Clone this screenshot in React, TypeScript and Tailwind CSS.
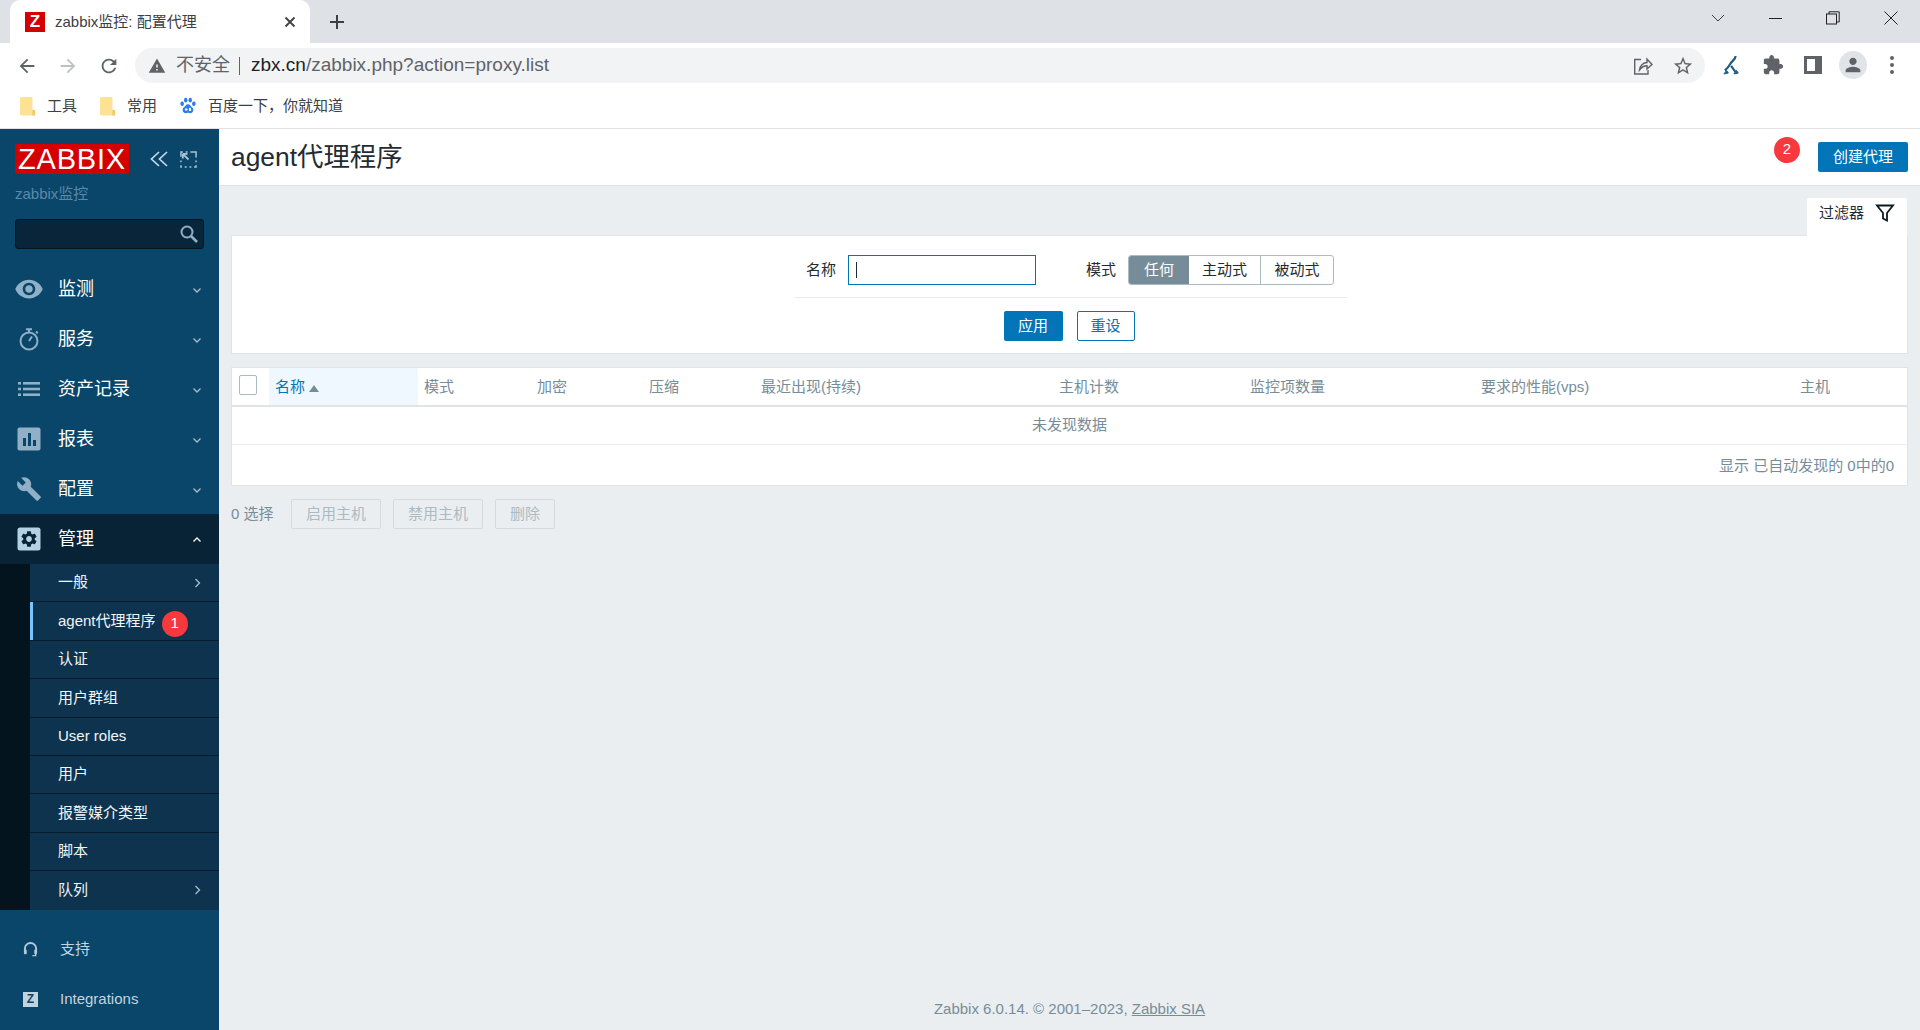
import React from "react";

const P = ({ d, className, fill = "currentColor" }: { d: string; className?: string; fill?: string }) => (
  <svg viewBox="0 0 24 24" className={className} fill={fill}><path d={d} /></svg>
);

const Chev = ({ dir = "down" }: { dir?: "down" | "up" | "right" }) => (
  <svg viewBox="0 0 10 10" className="w-[10px] h-[10px] text-[#a9bdcb]" fill="none" stroke="currentColor" strokeWidth="1.3">
    {dir === "down" && <path d="M1.5 3.5 5 7l3.5-3.5" />}
    {dir === "up" && <path d="M1.5 6.5 5 3l3.5 3.5" stroke="#fff" />}
    {dir === "right" && <path d="M3.5 1 7.5 5l-4 4" />}
  </svg>
);

const EyeI = () => <P className="w-[30px] h-[30px] text-[#8fb0c6]" d="M12 4.5C7 4.5 2.73 7.61 1 12c1.73 4.39 6 7.5 11 7.5s9.27-3.11 11-7.5c-1.73-4.39-6-7.5-11-7.5zM12 17c-2.76 0-5-2.24-5-5s2.24-5 5-5 5 2.24 5 5-2.24 5-5 5zm0-8c-1.66 0-3 1.34-3 3s1.34 3 3 3 3-1.34 3-3-1.34-3-3-3z" />;
const WatchI = () => (
  <svg viewBox="0 0 24 24" className="w-[24px] h-[24px] text-[#8fb0c6]" fill="none" stroke="currentColor" strokeWidth="2">
    <circle cx="12" cy="14" r="8.5" /><path d="M9 2.2h6M12 2.500v3M19 4.500l1.800 1.800M12 14l3-4.500" />
  </svg>
);
const ListI = () => (
  <svg viewBox="0 0 24 24" className="w-[24px] h-[24px] text-[#8fb0c6]" fill="currentColor">
    <rect x="1" y="5" width="3" height="2.6" /><rect x="6" y="5" width="17" height="2.6" />
    <rect x="1" y="10.7" width="3" height="2.6" /><rect x="6" y="10.7" width="17" height="2.6" />
    <rect x="1" y="16.4" width="3" height="2.6" /><rect x="6" y="16.4" width="17" height="2.6" />
  </svg>
);
const ChartI = () => (
  <svg viewBox="0 0 24 24" className="w-[24px] h-[24px]">
    <rect x="0.5" y="0.5" width="23" height="23" rx="2" fill="#8fb0c6" />
    <rect x="6" y="11" width="3" height="8" fill="#0a466a" /><rect x="11" y="6" width="3" height="13" fill="#0a466a" /><rect x="16" y="13" width="3" height="6" fill="#0a466a" />
  </svg>
);
const WrenchI = () => <P className="w-[26px] h-[26px] text-[#8fb0c6]" d="M22.7 19l-9.1-9.1c.9-2.3.4-5-1.5-6.9-2-2-5-2.4-7.4-1.3L9 6 6 9 1.6 4.7C.4 7.1.9 10.1 2.9 12.1c1.9 1.9 4.6 2.4 6.9 1.5l9.1 9.1c.4.4 1 .4 1.4 0l2.3-2.3c.5-.4.5-1.1.1-1.4z" />;
const GearI = () => (
  <svg viewBox="0 0 24 24" className="w-[24px] h-[24px]">
    <rect x="0.5" y="0.5" width="23" height="23" rx="2.5" fill="#b3d0e4" />
    <g transform="translate(2.4 2.4) scale(0.8)"><path fill="#082335" d="M19.14 12.94c.04-.3.06-.61.06-.94 0-.32-.02-.64-.07-.94l2.03-1.58c.18-.14.23-.41.12-.61l-1.92-3.32c-.12-.22-.37-.29-.59-.22l-2.39.96c-.5-.38-1.03-.7-1.62-.94l-.36-2.54c-.04-.24-.24-.41-.48-.41h-3.84c-.24 0-.43.17-.47.41l-.36 2.54c-.59.24-1.13.57-1.62.94l-2.39-.96c-.22-.08-.47 0-.59.22L2.74 8.87c-.12.21-.08.47.12.61l2.03 1.58c-.05.3-.09.63-.09.94s.02.64.07.94l-2.03 1.58c-.18.14-.23.41-.12.61l1.92 3.32c.12.22.37.29.59.22l2.39-.96c.5.38 1.03.7 1.62.94l.36 2.54c.05.24.24.41.48.41h3.84c.24 0 .44-.17.47-.41l.36-2.54c.59-.24 1.13-.56 1.62-.94l2.39.96c.22.08.47 0 .59-.22l1.92-3.32c.12-.22.07-.47-.12-.61l-2.01-1.58zM12 15.6c-1.98 0-3.6-1.62-3.6-3.6s1.62-3.6 3.6-3.6 3.6 1.62 3.6 3.6-1.62 3.6-3.6 3.6z" /></g>
  </svg>
);

const Folder = () => (
  <svg viewBox="0 0 16 20" className="w-[16px] h-[20px]">
    <path d="M1 2.500A1.500 1.500 0 0 1 2.500 1H12a1.500 1.500 0 0 1 1.500 1.500V14H16v4.500a1 1 0 0 1-1 1H2.500A1.500 1.500 0 0 1 1 18z" fill="#fde293" />
    <path d="M13.500 14H16v4.500a1 1 0 0 1-1 1h-1.500z" fill="#f3c95c" />
  </svg>
);

const Baidu = () => (
  <svg viewBox="0 0 20 20" className="w-[18px] h-[18px]" fill="#2b7de9">
    <ellipse cx="3.5" cy="7.5" rx="2" ry="2.6" /><ellipse cx="7.5" cy="3.5" rx="1.9" ry="2.6" />
    <ellipse cx="12.5" cy="3.5" rx="1.9" ry="2.6" /><ellipse cx="16.5" cy="7.5" rx="2" ry="2.6" />
    <path d="M10 8c-2.4 0-3 2.400-5 4-1.800 1.400-1 6 2.400 6 1 0 1.600-.4 2.600-.4s1.600.4 2.600.4c3.400 0 4.200-4.600 2.400-6-2-1.600-2.600-4-5-4z" />
    <circle cx="8" cy="14" r="1.4" fill="#fff" /><rect x="11" y="12" width="2.4" height="3.6" rx="1" fill="#fff" />
  </svg>
);

const Badge = ({ n }: { n: string }) => (
  <span className="w-[26px] h-[26px] rounded-full bg-[#f7383c] text-white text-[15px] leading-[24px] text-center">{n}</span>
);

const menu: [React.ReactNode, string, boolean][] = [
  [<EyeI />, "监测", false],
  [<WatchI />, "服务", false],
  [<ListI />, "资产记录", false],
  [<ChartI />, "报表", false],
  [<WrenchI />, "配置", false],
  [<GearI />, "管理", true],
];

const sub: [string, boolean][] = [
  ["一般", true],
  ["agent代理程序", false],
  ["认证", false],
  ["用户群组", false],
  ["User roles", false],
  ["用户", false],
  ["报警媒介类型", false],
  ["脚本", false],
  ["队列", true],
];

const Sidebar = () => (
  <aside className="w-[219px] shrink-0 bg-[#0a466a] flex flex-col h-full">
    <div className="pl-[15px] pr-[15px] pt-[15px]">
      <div className="flex items-center h-[30px]">
        <div className="w-[114px] h-[30px] bg-[#d40000] text-white text-[29px] leading-[30px] text-center tracking-[0.8px] font-normal">ZABBIX</div>
        <svg viewBox="0 0 20 20" className="w-[20px] h-[20px] ml-[20px] text-[#c8d9e4]" fill="none" stroke="currentColor" strokeWidth="1.7">
          <path d="M10 3 2.500 10l7.500 7M18 3l-7.500 7 7.500 7" />
        </svg>
        <svg viewBox="0 0 18 18" className="w-[17px] h-[17px] ml-[11px] text-[#a9c2d2]" fill="none" stroke="currentColor" strokeWidth="1.6">
          <path d="M1 6V1h2M6 1h2M11 1h6v6M17 10v2M17 15v2h-2M12 17h-2M7 17H5M2 17H1v-2M1 12v-2" />
          <path d="M9 9 3 3M3 3h5M3 3v5" strokeWidth="2" />
        </svg>
      </div>
      <div className="text-[15px] leading-[20px] text-[#5b89a8] mt-[10px]">zabbix监控</div>
      <div className="mt-[15px] h-[30px] w-[189px] rounded-[3px] bg-[#08253a] border border-[#041520] flex items-center justify-end pr-[4px]">
        <svg viewBox="0 0 20 20" className="w-[20px] h-[20px] text-[#8fb0c6]" fill="none" stroke="currentColor">
          <circle cx="8" cy="8" r="5.5" strokeWidth="2" /><path d="M12 12l6 6" strokeWidth="2.6" />
        </svg>
      </div>
    </div>
    <nav className="mt-[15px]">
      {menu.map(([icon, label, open]) => (
        <div key={label} className={`h-[50px] flex items-center relative ${open ? "bg-[#082335]" : ""}`}>
          <div className="w-[58px] flex justify-center">{icon}</div>
          <span className="text-[18px] leading-[26px] mb-[1px] text-white flex-1">{label}</span>
          <span className="pr-[17px] pt-[2px] flex"><Chev dir={open ? "up" : "down"} /></span>
        </div>
      ))}
      <div className="bg-[#03141e] pl-[30px]">
        {sub.map(([label, arrow], i) => (
          <div key={label} className={`h-[38.4px] flex items-center bg-[#0e334e] ${i < 8 ? "border-b border-[#061b2b]" : ""} ${i === 1 ? "bg-[#0b2b41] relative" : "pl-[28px]"}`}>
            {i === 1 && <span className="w-[3px] h-full bg-[#78c4ff] mr-[25px]" />}
            <span className="text-[15px] text-[#f2f6f8]">{label}</span>
            {i === 1 && <span className="ml-[6px] mt-[5px] flex"><Badge n="1" /></span>}
            {arrow && <span className="ml-auto pr-[17px] flex"><Chev dir="right" /></span>}
          </div>
        ))}
      </div>
    </nav>
    <div className="mt-[15px] flex flex-col">
      <div className="h-[50px] flex items-center pl-[23px] gap-[22px]">
        <svg viewBox="0 0 16 18" className="w-[15px] h-[17px] text-[#b3c9d8]" fill="none" stroke="currentColor" strokeWidth="2">
          <path d="M2 11V8a6 6 0 0 1 12 0v3" /><rect x="1" y="9" width="3" height="5" rx="1" fill="currentColor" strokeWidth="0" /><rect x="12" y="9" width="3" height="5" rx="1" fill="currentColor" strokeWidth="0" /><path d="M13.500 13v2.500H10" strokeWidth="1.5" />
        </svg>
        <span className="text-[15px] text-[#c3d4df]">支持</span>
      </div>
      <div className="h-[50px] flex items-center pl-[23px] gap-[22px]">
        <span className="w-[15px] h-[15px] bg-[#c3d4df] text-[#0a466a] text-[12px] leading-[15px] font-bold text-center">Z</span>
        <span className="text-[15px] text-[#c3d4df]">Integrations</span>
      </div>
    </div>
  </aside>
);

const Seg = ({ t, cls }: { t: string; cls: string }) => (
  <div className={`h-full flex items-center justify-center ${cls}`}>{t}</div>
);

const Filter = () => (
  <div className="bg-white border border-[#dfe4e7] h-[119px] flex flex-col items-center">
    <div className="flex items-center h-[30px] mt-[19px] ml-[1px]">
      <label className="text-[15px] text-[#1f2c33] mr-[12px]">名称</label>
      <div className="w-[188px] h-[30px] border border-[#0275b8] flex items-center pl-[7px]">
        <span className="w-px h-[16px] bg-[#1f2c33]" />
      </div>
      <label className="text-[15px] text-[#1f2c33] ml-[50px] mr-[12px]">模式</label>
      <div className="flex h-[30px] w-[206px] text-[15px] text-[#1f2c33] border border-[#acbbc2] rounded-[3px] overflow-hidden">
        <Seg t="任何" cls="w-[60px] bg-[#768d99] text-white" />
        <Seg t="主动式" cls="w-[72px] border-r border-[#acbbc2]" />
        <Seg t="被动式" cls="w-[72px]" />
      </div>
    </div>
    <div className="w-[553px] h-px bg-[#ebeef0] mt-[12px] ml-[1px]" />
    <div className="flex gap-[14px] mt-[13px] ml-[-1px]">
      <div className="w-[59px] h-[30px] rounded-[2px] bg-[#0275b8] text-white text-[15px] flex items-center justify-center">应用</div>
      <div className="w-[58px] h-[30px] rounded-[2px] border border-[#0275b8] text-[#0275b8] text-[15px] flex items-center justify-center">重设</div>
    </div>
  </div>
);

const cols: [string, number][] = [
  ["模式", 113], ["加密", 112], ["压缩", 112], ["最近出现(持续)", 298], ["主机计数", 191], ["监控项数量", 231], ["要求的性能(vps)", 319], ["主机", 113],
];

const ProxyTable = () => (
  <div className="bg-white border border-[#dfe4e7] mt-[13px]">
    <table className="w-full table-fixed border-collapse text-[15px]">
      <colgroup>
        <col className="w-[37px]" />
        <col className="w-[149px]" />
        {cols.map(([t, w]) => <col key={t} style={{ width: w }} />)}
      </colgroup>
      <thead>
        <tr className="h-[38px] border-b-2 border-[#dfe4e7]">
          <th className="p-0 pl-[7px] pb-[3px] font-normal text-left"><span className="block w-[18px] h-[20px] border border-[#acbbc2] rounded-[2px]" /></th>
          <th className="p-0 pl-[6px] pt-[1px] font-normal text-left bg-[#f0f8ff] text-[#0275b8]">
            名称<span className="inline-block ml-[4px] w-0 h-0 border-x-[5px] border-x-transparent border-b-[7px] border-b-[#768d99]" />
          </th>
          {cols.map(([t]) => <th key={t} className="p-0 pl-[6px] pt-[1px] font-normal text-left text-[#768d99]">{t}</th>)}
        </tr>
      </thead>
      <tbody>
        <tr className="h-[38px] border-b border-[#ebeef0]">
          <td colSpan={10} className="text-center text-[#768d99] p-0">未发现数据</td>
        </tr>
      </tbody>
    </table>
    <div className="h-[40px] flex items-center justify-end pr-[13px] pt-[4px] text-[15px] text-[#768d99]">显示 已自动发现的 0中的0</div>
  </div>
);

const Dis = ({ t, w }: { t: string; w: string }) => (
  <div className={`h-[30px] ${w} rounded-[2px] border border-[#d5dade] bg-[#ebeef0] text-[#acbbc2] text-[15px] flex items-center justify-center`}>{t}</div>
);

const Main = () => (
  <main className="flex-1 min-w-0 flex flex-col bg-[#ebeef0]">
    <header className="h-[57px] bg-white border-b border-[#dfe4e7] flex items-center pl-[12px] pr-[12px]">
      <h1 className="text-[26.4px] text-[#1f2c33] font-normal leading-none mt-[1px] flex-1">agent代理程序</h1>
      <span className="flex mr-[18px] mt-[-14px]"><Badge n="2" /></span>
      <div className="w-[90px] h-[30px] rounded-[2px] bg-[#0275b8] text-white text-[15px] flex items-center justify-center">创建代理</div>
    </header>
    <div className="pl-[12px] pr-[12px] flex-1 flex flex-col">
      <div className="flex justify-end mt-[12px] pr-[1px]">
        <div className="w-[100px] h-[38px] bg-white rounded-t-[2px] flex items-start pl-[12px] pt-[5px] gap-[11px] -mb-px relative z-10">
          <span className="text-[15px] leading-[20px] text-[#1f2c33]">过滤器</span>
          <svg viewBox="0 0 20 20" className="w-[20px] h-[20px] text-[#0c1a22]" fill="none" stroke="currentColor" strokeWidth="1.8">
            <path d="M2 2.500h16L12 10v7.500l-4-2V10z" />
          </svg>
        </div>
      </div>
      <Filter />
      <ProxyTable />
      <div className="flex items-center mt-[13px] pt-[1px] h-[30px] text-[15px] text-[#768d99]">
        <span className="w-[60px]">0 选择</span>
        <div className="flex gap-[12px]">
          <Dis t="启用主机" w="w-[90px]" />
          <Dis t="禁用主机" w="w-[90px]" />
          <Dis t="删除" w="w-[60px]" />
        </div>
      </div>
      <footer className="mt-auto h-[32px] text-center text-[15px] text-[#768d99]">
        Zabbix 6.0.14. © 2001–2023, <span className="underline">Zabbix SIA</span>
      </footer>
    </div>
  </main>
);

const Chrome = () => (
  <div className="shrink-0 bg-white">
    <div className="h-[43px] bg-[#dee1e6] flex items-end">
      <div className="w-[300px] h-[43px] ml-[10px] bg-white rounded-t-[10px] flex items-center pl-[15px] pt-[1px] text-[15px] text-[#3c4043]">
        <span className="w-[20px] h-[20px] bg-[#d40000] text-white text-[17px] leading-[20px] font-bold text-center mr-[10px]">Z</span>
        <span className="flex-1">zabbix监控: 配置代理</span>
        <svg viewBox="0 0 12 12" className="w-[12px] h-[12px] mr-[14px] text-[#3c4043]" fill="none" stroke="currentColor" strokeWidth="1.8"><path d="M1.500 1.500l9 9M10.500 1.500l-9 9" /></svg>
      </div>
      <div className="h-[43px] flex items-center ml-[19px]">
        <svg viewBox="0 0 16 16" className="w-[16px] h-[16px] text-[#3c4043]" fill="none" stroke="currentColor" strokeWidth="2"><path d="M8 1v14M1 8h14" /></svg>
      </div>
      <div className="flex-1" />
      <div className="h-[43px] flex items-start pt-[11px] text-[#3c4043] pr-[22px]">
        <svg viewBox="0 0 14 8" className="w-[14px] h-[8px] mt-[3px]" fill="none" stroke="currentColor"><path d="M1 1l6 6 6-6" /></svg>
        <span className="w-[13px] h-px bg-[#202124] ml-[44px] mt-[7px]" />
        <svg viewBox="0 0 14 14" className="w-[14px] h-[14px] ml-[44px]" fill="none" stroke="#202124"><rect x="0.5" y="3" width="10" height="10" /><path d="M3 3V0.800h10.200V11H10.500" /></svg>
        <svg viewBox="0 0 14 14" className="w-[14px] h-[14px] ml-[44px]" fill="none" stroke="#202124"><path d="M0.500 0.500l13 13M13.500 0.500l-13 13" /></svg>
      </div>
    </div>
    <div className="h-[41px] pt-[4px] flex items-center">
      <div className="w-[135px] flex items-center pl-[16px] gap-[19px]">
        <P className="w-[22px] h-[22px] text-[#5f6368]" d="M20 11H7.830l5.590-5.590L12 4l-8 8 8 8 1.410-1.410L7.830 13H20v-2z" />
        <P className="w-[22px] h-[22px] text-[#bdc1c6]" d="M12 4l-1.410 1.410L16.170 11H4v2h12.170l-5.580 5.590L12 20l8-8z" />
        <P className="w-[22px] h-[22px] text-[#5f6368]" d="M17.650 6.350C16.200 4.900 14.210 4 12 4c-4.420 0-7.990 3.580-7.990 8s3.570 8 7.990 8c3.730 0 6.840-2.550 7.730-6h-2.080c-.820 2.330-3.040 4-5.650 4-3.310 0-6-2.690-6-6s2.690-6 6-6c1.660 0 3.140.690 4.220 1.780L13 11h7V4l-2.350 2.350z" />
      </div>
      <div className="w-[1570px] h-[35px] rounded-full bg-[#f1f3f4] flex items-center pl-[13px]">
        <P className="w-[18px] h-[18px] text-[#5f6368]" d="M1 21h22L12 2 1 21zm12-3h-2v-2h2v2zm0-4h-2v-4h2v4z" />
        <span className="ml-[10px] text-[18px] text-[#5f6368]">不安全</span>
        <span className="w-px h-[18px] bg-[#5f6368] ml-[9px] mr-[11px]" />
        <span className="text-[19px] text-[#202124]">zbx.cn</span>
        <span className="text-[19px] text-[#5f6368]">/zabbix.php?action=proxy.list</span>
        <svg viewBox="0 0 20 20" className="w-[20px] h-[20px] ml-auto mr-[1px] text-[#5f6368]" fill="none" stroke="currentColor" strokeWidth="1.4">
          <path d="M8 3.500H1.700V18H15v-4" /><path d="M6.500 14c.5-4.500 4-7.500 7.500-7.500V3l5 5.500-5 4.500V9.800c-3 0-5.500 1.500-7.500 4.200z" />
        </svg>
        <P className="w-[22px] h-[22px] ml-[18px] mr-[11px] text-[#5f6368]" d="M22 9.240l-7.190-.620L12 2 9.190 8.630 2 9.240l5.460 4.730L5.820 21 12 17.270 18.180 21l-1.630-7.030L22 9.240zM12 15.400l-3.760 2.270 1-4.280-3.320-2.880 4.380-.380L12 6.100l1.710 4.040 4.380.380-3.320 2.880 1 4.280L12 15.400z" />
      </div>
      <div className="flex items-center pl-[18px] mb-[2px]">
        <svg viewBox="0 0 20 22" className="w-[18px] h-[20px] text-[#1f5a82]" fill="none" stroke="currentColor" strokeWidth="2.4">
          <path d="M14 1c0 4-4 5-6 9-1.500 2.800-3 5-6 7M9 12l5 7" /><path d="M1 21l3-4 2 3zM12 21l5-1-2-3z" fill="currentColor" strokeWidth="1" />
        </svg>
        <P className="w-[22px] h-[22px] ml-[21px] text-[#5f6368]" d="M20.500 11H19V7c0-1.100-.9-2-2-2h-4V3.500C13 2.120 11.880 1 10.500 1S8 2.120 8 3.500V5H4c-1.100 0-1.990.9-1.990 2v3.800H3.500c1.490 0 2.700 1.210 2.700 2.700s-1.210 2.700-2.700 2.700H2V20c0 1.100.9 2 2 2h3.800v-1.500c0-1.490 1.210-2.700 2.700-2.700 1.490 0 2.700 1.210 2.700 2.700V22H17c1.100 0 2-.9 2-2v-4h1.500c1.380 0 2.500-1.120 2.500-2.500S21.880 11 20.500 11z" />
        <span className="w-[18px] h-[18px] ml-[20px] border-[3px] border-r-[7px] border-[#5f6368] bg-white" />
        <span className="w-[28px] h-[28px] ml-[17px] rounded-full bg-[#e0e3e8] flex items-center justify-center">
          <P className="w-[22px] h-[22px] text-[#5f6368]" d="M12 12c2.210 0 4-1.790 4-4s-1.790-4-4-4-4 1.790-4 4 1.790 4 4 4zm0 2c-2.670 0-8 1.340-8 4v2h16v-2c0-2.660-5.330-4-8-4z" />
        </span>
        <span className="ml-[23px] flex flex-col gap-[3px]">
          <span className="w-[4px] h-[4px] rounded-full bg-[#5f6368]" /><span className="w-[4px] h-[4px] rounded-full bg-[#5f6368]" /><span className="w-[4px] h-[4px] rounded-full bg-[#5f6368]" />
        </span>
      </div>
    </div>
    <div className="h-[44px] flex items-center text-[15px] text-[#3c4043] border-b border-[#dfe1e5] box-content">
      <span className="ml-[19px] flex"><Folder /></span><span className="ml-[12px] w-[52px] pt-[1px]">工具</span>
      <span className="flex"><Folder /></span><span className="ml-[12px] w-[52px] pt-[1px]">常用</span>
      <span className="flex"><Baidu /></span><span className="ml-[11px] pt-[1px]">百度一下，你就知道</span>
    </div>
  </div>
);

export default function App() {
  return (
    <div className="w-[1920px] h-[1030px] overflow-hidden flex flex-col font-['Liberation_Sans','Noto_Sans_CJK_SC',sans-serif]">
      <Chrome />
      <div className="flex-1 min-h-0 flex">
        <Sidebar />
        <Main />
      </div>
    </div>
  );
}
